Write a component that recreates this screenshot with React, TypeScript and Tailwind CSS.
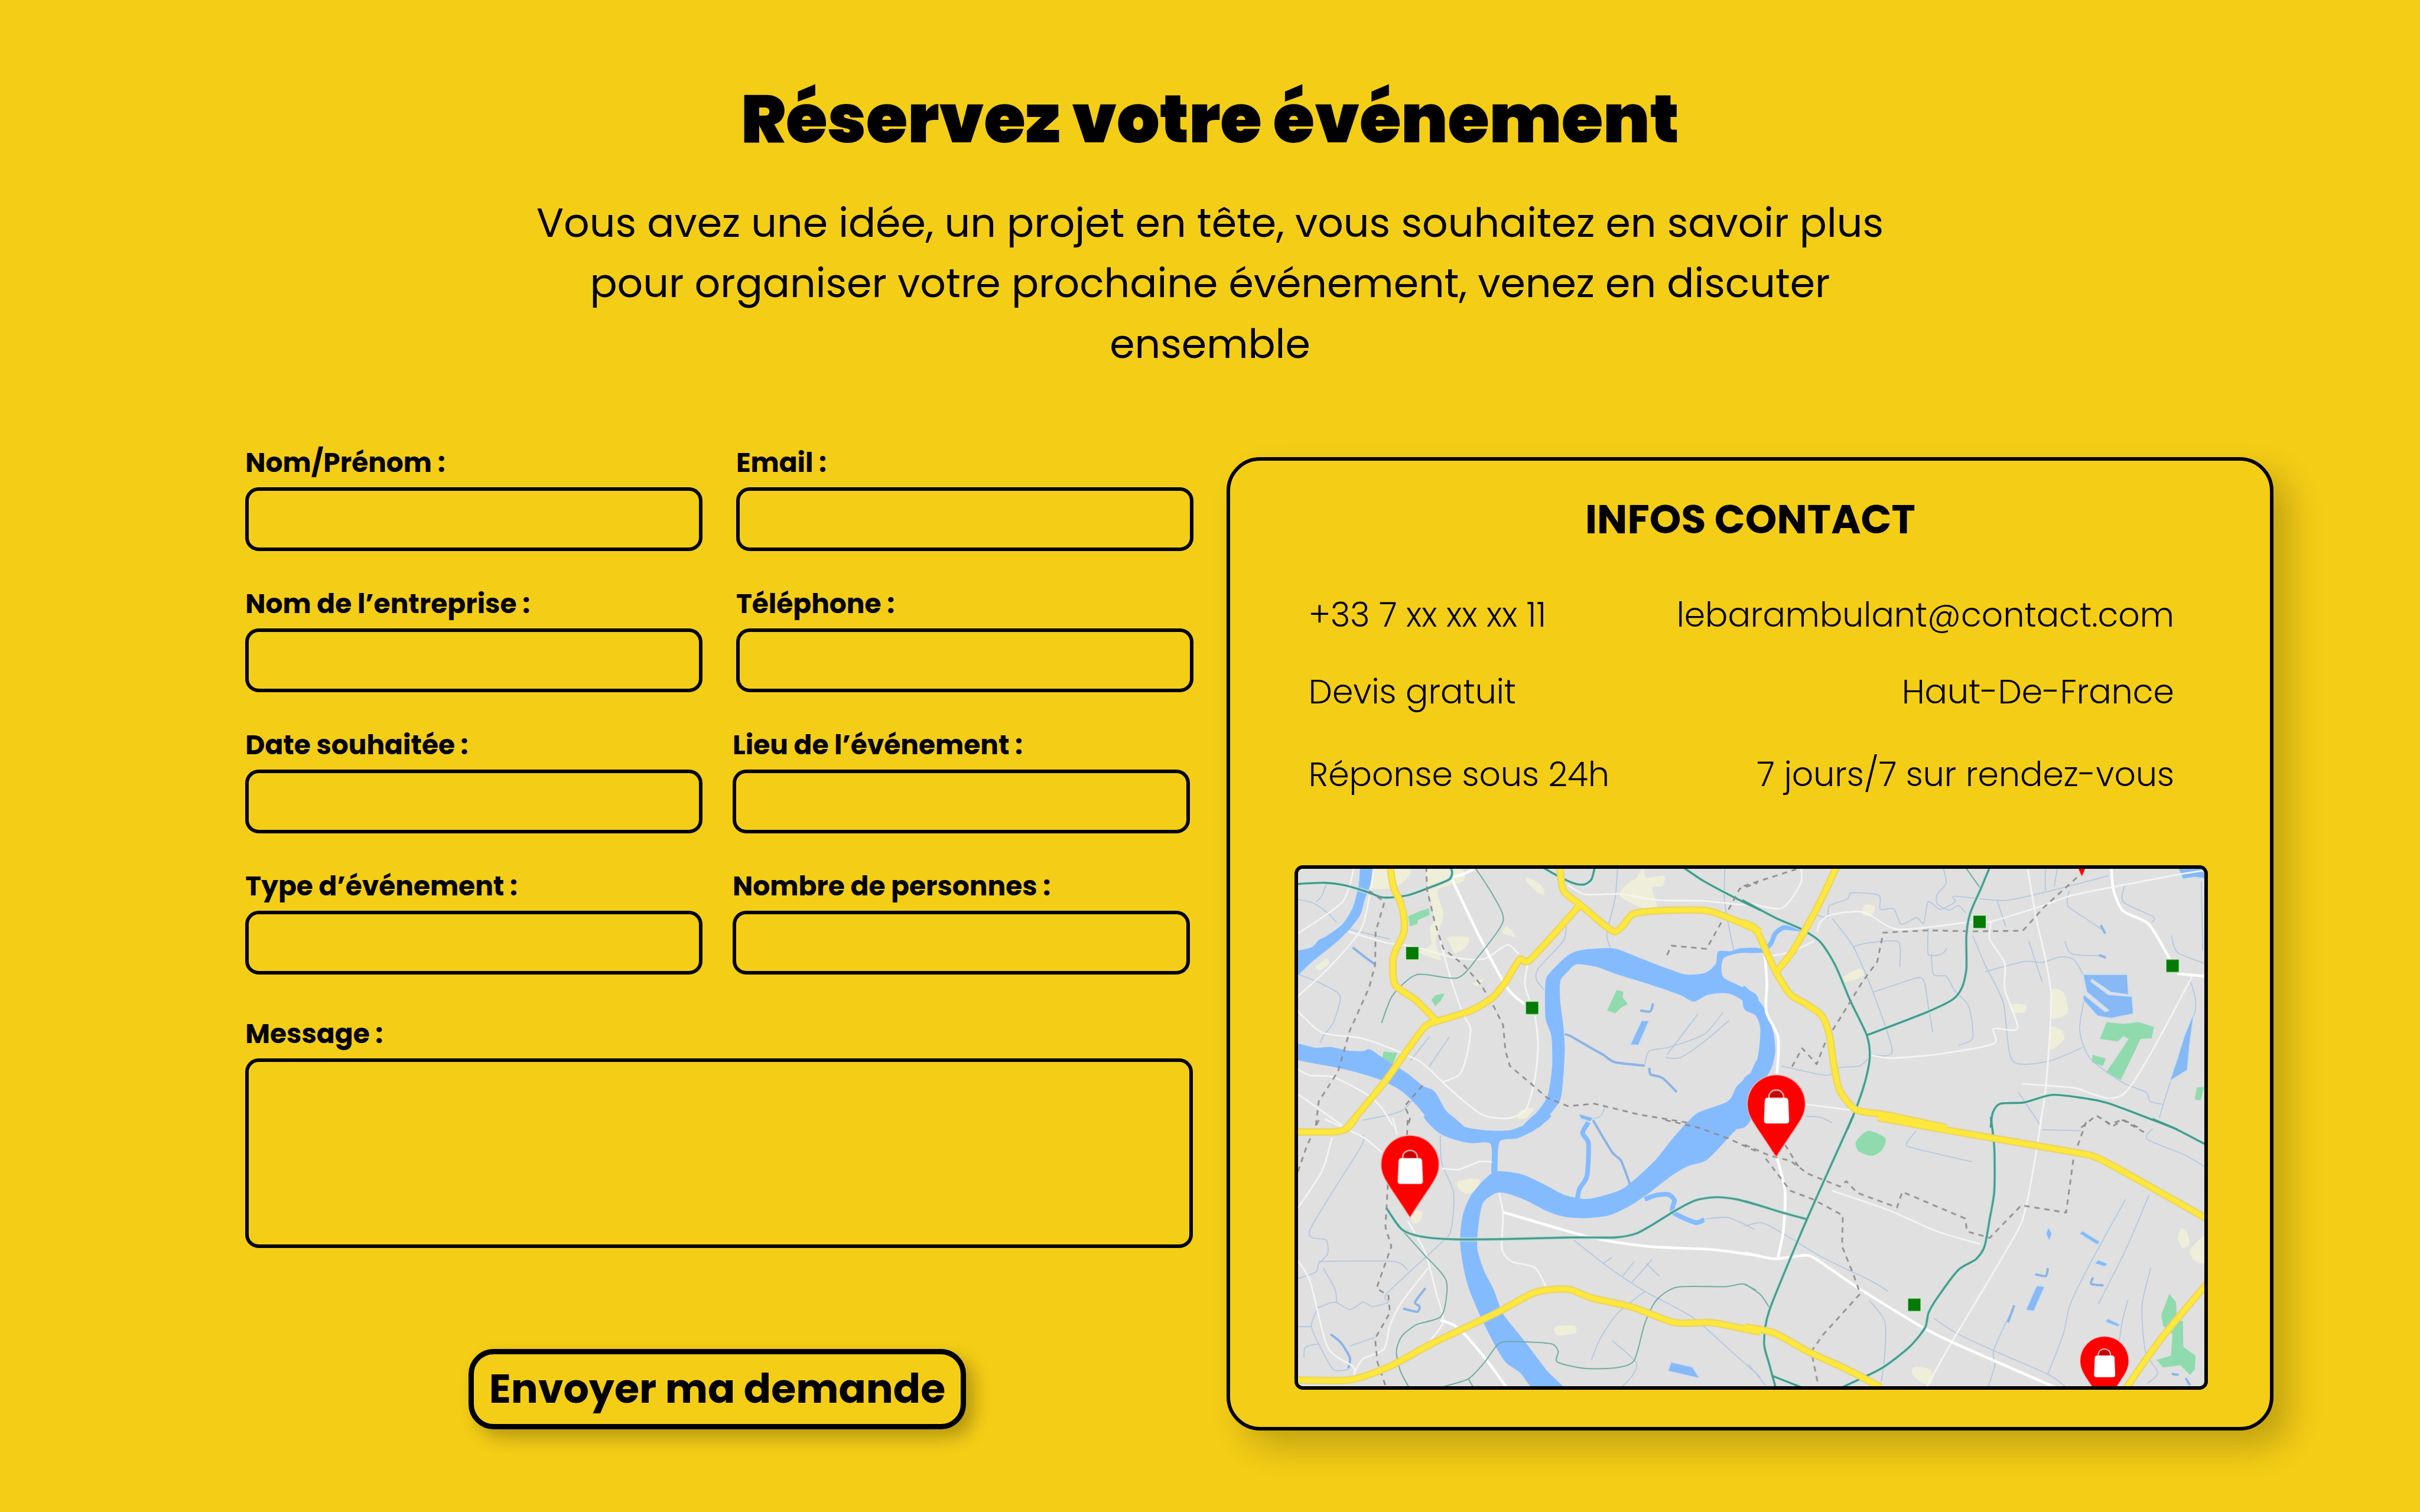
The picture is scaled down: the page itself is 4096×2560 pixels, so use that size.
import type { ReactNode } from "react";

/* ------------------------------------------------------------------ map */

type Tile = "nw" | "ne" | "sw" | "se";
type Shape = [Tile, string];

// Each quadrant of the map has its own drawing grid.
const TILE: Record<Tile, string> = {
  nw: "translate(2300 1530) scale(0.52934 0.33333)",
  ne: "translate(3120 1530) scale(0.53571 0.33333)",
  sw: "translate(2300 2000) scale(0.52934 0.38265)",
  se: "translate(3120 2000) scale(0.625 0.38265)",
};

// Catmull-Rom curve through "x,y x,y ..." points.
function curve(points: string, closed: boolean): string {
  const p = points.trim().split(/\s+/).map((s) => s.split(",").map(Number));
  const n = p.length;
  const at = (i: number) => (closed ? p[(i + n) % n] : p[Math.max(0, Math.min(n - 1, i))]);
  let d = `M${p[0][0]} ${p[0][1]}`;
  const last = closed ? n : n - 1;
  for (let i = 0; i < last; i++) {
    const [a, b, c, e] = [at(i - 1), at(i), at(i + 1), at(i + 2)];
    const k = 8;
    d += `C${b[0] + (c[0] - a[0]) / k} ${b[1] + (c[1] - a[1]) / k} ${c[0] - (e[0] - b[0]) / k} ${c[1] - (e[1] - b[1]) / k} ${c[0]} ${c[1]}`;
  }
  return closed ? d + "Z" : d;
}

const straight = (points: string) => "M" + points.trim().split(/\s+/).join("L");

function Lines({ items, color, width, dash, sharp, opacity }: { items: Shape[]; color: string; width: number; dash?: string; sharp?: boolean; opacity?: number }) {
  return (
    <g fill="none" stroke={color} strokeWidth={width} strokeDasharray={dash} strokeLinejoin="round" opacity={opacity}>
      {items.map(([t, pts], i) => (
        <g key={i} transform={TILE[t]}>
          <path d={sharp ? straight(pts) : curve(pts, false)} vectorEffect="non-scaling-stroke" />
        </g>
      ))}
    </g>
  );
}

function Areas({ items, color, halo, sharp }: { items: Shape[]; color: string; halo?: string; sharp?: boolean }) {
  return (
    <g fill={color} stroke={halo} strokeWidth={halo ? 4 : 0} strokeLinejoin="round" paintOrder="stroke">
      {items.map(([t, pts], i) => (
        <g key={i} transform={TILE[t]}>
          <path d={sharp ? straight(pts) + "Z" : curve(pts, true)} vectorEffect="non-scaling-stroke" paintOrder="stroke" />
        </g>
      ))}
    </g>
  );
}

const rivers: Shape[] = [
  ["nw", "243,40 280,40 275,140 255,230 240,310 205,385 150,470 75,565 35,625 10,640 10,518 75,485 100,445 125,425 180,360 215,270 235,150"],
  ["nw", "10,998 90,1022 140,1018 200,1038 250,1040 272,1030 315,1075 365,1125 400,1160 450,1225 492,1258 530,1360 590,1450 500,1450 430,1330 380,1255 310,1195 230,1155 150,1125 10,1078"],
  ["sw", "455,-20 500,55 550,88 610,108 680,112 683,245 702,245 710,102 770,85 830,45 885,-20 825,-20 790,25 745,47 700,50 645,45 590,30 545,-20"],
  ["nw", "785,1450 840,1360 870,1290 882,1200 888,1100 885,960 865,860 865,670 880,620 930,540 960,510 1000,495 1070,488 1110,495 1190,545 1280,600 1340,630 1405,620 1440,570 1447,507 1490,505 1520,490 1580,487 1580,512 1520,515 1465,545 1463,640 1520,690 1580,745 1580,850 1530,770 1490,735 1450,730 1410,740 1365,775 1320,740 1250,700 1170,660 1100,625 1040,590 970,575 940,615 915,665 915,780 925,900 930,1020 926,1160 915,1300 870,1400 842,1450"],
  ["ne", "-15,690 45,790 70,870 85,950 90,1040 80,1120 60,1180 30,1230 -15,1320 -15,1190 20,1140 35,1040 40,920 25,850 -15,810"],
  ["nw", "1580,1090 1555,1160 1510,1230 1480,1310 1375,1375 1350,1450 1535,1450 1580,1280"],
  ["sw", "1378,-20 1310,60 1240,180 1180,260 1120,325 1040,360 990,368 930,350 860,300 790,255 730,240 690,243 650,290 610,360 585,450 577,570 590,700 610,800 650,930 690,1040 730,1130 780,1180 830,1260 930,1260 870,1170 810,1060 770,990 720,900 690,790 660,710 635,600 640,480 655,385 700,340 740,345 800,375 870,425 930,452 1000,458 1080,445 1150,400 1210,345 1290,260 1345,215 1410,185 1490,70 1540,-20"],
];

const ponds: Shape[] = [
  ["nw", "1190,880 1212,880 1178,1005 1153,1005"],
  ["ne", "1118,632 1262,632 1266,735 1210,722 1145,652 1140,668 1200,740 1278,750 1282,838 1210,862 1165,850 1118,765 1118,740 1190,832 1205,822 1130,722"],
  ["ne", "1483,850 1470,1000 1462,1140 1408,1195 1432,1080 1455,960"],
  ["ne", "1435,60 1530,60 1530,115 1490,105 1450,115"],
  ["se", "825,775 845,780 815,890 795,885"],
  ["se", "955,520 1002,568 998,580 948,530"],
  ["se", "858,505 866,530 860,560 852,530"],
  ["se", "1000,655 1025,672 1018,682 992,668"],
  ["se", "1028,930 1060,955 1055,963 1022,940"],
  ["sw", "1290,1133 1360,1155 1382,1203 1280,1170"],
  ["nw", "980,1380 1025,1400 1015,1415 985,1400"],
];

const parks: Shape[] = [
  ["nw", "402,318 440,290 472,275 475,310 435,338 432,360 408,372"],
  ["nw", "525,730 512,770 493,800 480,765 495,740"],
  ["nw", "318,1042 365,1050 350,1110 315,1080"],
  ["nw", "1105,713 1128,722 1125,752 1143,788 1120,808 1100,838 1073,822"],
  ["ne", "1195,885 1250,895 1300,885 1352,910 1345,972 1308,975 1242,1195 1192,1155 1225,1080 1268,975 1250,960 1232,988 1172,975"],
  ["ne", "1148,1060 1192,1080 1182,1120 1145,1100"],
  ["ne", "1495,1235 1520,1232 1508,1305 1488,1300"],
  ["se", "1203,812 1222,850 1225,930 1242,940 1243,1060 1278,1100 1276,1165 1262,1190 1235,1145 1185,1155 1167,1120 1208,1100 1212,1000 1185,960 1180,910"],
];
const roundPark: Shape[] = [["se", "343,50 392,85 382,140 353,167 315,145 308,100"]];

const fields: Shape[] = [
  ["nw", "1195,60 1205,110 1265,100 1260,155 1225,165 1240,268 1185,268 1115,205 1150,130 1170,115"],
  ["nw", "805,110 850,150 862,200 840,190 800,130"],
  ["nw", "280,60 405,60 395,120 350,165 280,165"],
  ["nw", "470,60 580,60 590,125 545,150 500,180 520,310 495,450 510,550 440,510 480,470 475,380 490,330 470,170"],
  ["nw", "535,428 605,430 598,480 560,515 545,470"],
  ["nw", "735,370 765,430 720,405"],
  ["nw", "90,590 125,545 135,570 105,605"],
  ["nw", "780,1360 825,1345 800,1400 770,1400"],
  ["nw", "620,680 655,650 640,690"],
  ["ne", "390,255 422,265 410,315 380,305"],
  ["ne", "318,640 372,598 385,635 325,670"],
  ["ne", "1010,715 1050,725 1065,835 1010,862"],
  ["ne", "875,790 925,792 920,835 880,830"],
  ["ne", "1005,912 1045,930 1052,980 1008,1030"],
  ["sw", "570,285 640,275 635,320 600,345 572,320"],
  ["sw", "415,420 450,430 440,475 415,480"],
  ["sw", "898,965 962,960 965,995 905,1005"],
  ["se", "1238,505 1255,530 1260,580 1240,598 1228,550"],
  ["se", "1310,540 1310,665 1275,655 1262,615 1275,580"],
  ["se", "472,1155 520,1165 525,1225 500,1230 470,1190"],
];

const majorRoads: Shape[] = [
  ["nw", "340,40 352,160 375,240 388,330 386,410 360,500 350,560 358,685 430,770 498,880"],
  ["nw", "912,40 926,180 982,255 1060,360 1098,400 1125,370 1155,310 1190,295 1290,285 1395,285 1440,300 1520,350 1590,400"],
  ["nw", "982,255 815,548 778,550 730,670 685,755 610,825 500,880 455,915 370,1100 320,1210 190,1460"],
  ["sw", "225,-10 195,40 150,55 20,55"],
  ["ne", "298,40 230,270 150,500 95,612"],
  ["ne", "-20,350 20,378 45,450 90,610 140,735 190,785 245,850 270,950 285,1110 305,1250 360,1355 460,1382 660,1450"],
  ["se", "370,-12 560,45 930,150 1000,178 1110,275 1320,470"],
  ["sw", "10,1213 205,1213 340,1150 480,1045 700,900 830,805 940,790 1020,830 1160,875 1300,945 1420,945 1500,965 1590,990"],
  ["se", "-10,965 75,995 170,1080 290,1170 380,1250"],
  ["se", "1320,745 1180,1020 1080,1250"],
];

const transit: Shape[] = [
  ["nw", "20,145 120,138 190,152 260,185 318,217 400,205 480,160 540,120 550,85 545,50"],
  ["nw", "850,50 905,100 960,140 995,147 1020,120 1032,50"],
  ["nw", "1325,50 1400,130 1500,215 1590,285"],
  ["ne", "-20,230 90,325 175,385 240,455 290,580 340,770 395,955 405,1070 390,1200 360,1345 330,1460"],
  ["ne", "806,50 775,170 740,300 727,420 727,600 712,700 680,765 590,835 395,955"],
  ["ne", "808,1450 815,1370 840,1322 920,1315 1010,1275 1100,1288 1190,1315 1310,1385 1430,1460"],
  ["sw", "328,410 380,510 450,545 560,557 750,555 950,548 1100,548 1170,530 1230,485 1300,425 1370,375 1440,360 1510,370 1590,400"],
  ["se", "-10,378 90,428 165,462"],
  ["se", "300,-20 220,270 150,530 60,890 45,1040 60,1140 80,1260"],
  ["se", "693,-15 703,130 703,330 690,460 675,590 650,650 600,700 540,830 515,900 505,970 460,1060 380,1160 265,1250"],
  ["se", "1155,-5 1220,40 1320,125"],
  ["se", "70,1195 155,1250"],
];
const thinTransit: Shape[] = [
  ["nw", "625,50 690,210 722,345 640,530 568,648 432,630 350,740 312,890"],
  ["sw", "385,520 450,620 530,750 515,912 430,955 380,1010 362,1080 375,1170 405,1250"],
  ["sw", "520,1245 605,1208 660,1130 710,1042 780,1035 885,1045 908,1080 905,1130 1000,1160 1110,1155 1165,1120 1200,950 1240,840 1310,780 1470,778 1530,765 1575,795"],
  ["sw", "605,1208 622,1250"],
  ["se", "-10,765 35,815 62,880"],
  ["ne", "722,50 775,170"],
];

const whiteMajor: Shape[] = [
  ["nw", "550,120 640,420 735,700 795,790"],
  ["nw", "545,110 590,90 640,50"],
  ["ne", "1210,50 1218,180 1250,290 1335,360 1410,560"],
  ["ne", "1430,625 1530,640"],
  ["ne", "55,510 62,680 60,830 100,970 95,1180"],
  ["sw", "722,430 1010,545 1210,590 1430,605 1590,635"],
  ["sw", "512,935 570,970 660,1110 735,1250"],
  ["se", "-10,620 75,648 170,632 230,690 320,790 500,970 600,1050 880,1250"],
  ["se", "80,165 105,330 100,520 85,640"],
];
const whiteMinor: Shape[] = [
  ["nw", "220,50 180,240 20,420"],
  ["nw", "285,80 245,380 130,600 20,760"],
  ["nw", "200,400 330,460 420,480 560,540 660,545 735,470 775,520"],
  ["nw", "940,150 1000,200 1120,198 1240,230 1400,235 1520,255 1580,260"],
  ["nw", "510,450 545,650 590,850 612,920 600,1060 575,1165 520,1205"],
  ["nw", "20,810 110,940 240,970 350,1030 450,1105 540,1240 650,1380 740,1400 800,1350 830,1180 840,1000 830,850"],
  ["nw", "805,570 795,680 812,770"],
  ["nw", "20,1130 70,1170 150,1180 260,1270 310,1340 350,1440"],
  ["nw", "20,1260 180,1440"],
  ["ne", "175,50 175,140 110,275 -10,240"],
  ["ne", "230,400 240,350 280,308 385,295 500,388 730,350 810,345 980,262 1080,205 1250,150 1440,92 1530,70"],
  ["ne", "810,345 805,440 855,570 855,710 898,918 818,920 818,1000 640,1055 480,1078 410,1062"],
  ["ne", "930,50 960,330 990,540 1010,740 1005,950 990,1260 970,1460"],
  ["ne", "910,1215 1080,1235 1255,1265 1480,640"],
  ["ne", "75,530 140,510 220,450"],
  ["ne", "190,1325 360,1360"],
  ["sw", "350,-10 365,70"],
  ["sw", "120,-5 250,80 320,160"],
  ["sw", "145,80 110,240 20,430"],
  ["sw", "515,225 575,230 640,195 685,195"],
  ["sw", "708,340 722,440 718,600 750,660 830,690 870,790"],
  ["sw", "20,640 70,750 130,1060 215,1150 220,1190"],
  ["sw", "400,470 460,620 495,800 520,940 470,1040"],
  ["sw", "470,690 380,850 340,960 320,1070 250,1115 220,1180"],
  ["se", "838,-10 810,270 780,480 690,740 580,1040 510,1245"],
  ["se", "240,330 400,420 540,520 665,580"],
];

const streams: Shape[] = [
  ["nw", "20,225 80,245 130,300 160,350"],
  ["nw", "125,150 110,210 90,240"],
  ["nw", "20,620 110,680 172,745 150,885 115,960 105,1000"],
  ["nw", "1108,60 1100,220 1072,410 1085,490"],
  ["nw", "935,370 925,450 840,600 835,660 860,710"],
  ["nw", "475,960 410,1090"],
  ["nw", "540,965 470,1130"],
  ["nw", "1380,840 1275,1060"],
  ["nw", "1465,830 1400,950 1280,1020 1215,1040 1200,1110"],
  ["nw", "1485,875 1400,990 1320,1075 1270,1075"],
  ["nw", "200,385 340,440"],
  ["nw", "1470,60 1470,250 1500,500"],
  ["nw", "250,1410 380,1360 450,1230"],
  ["nw", "1065,1340 1050,1390 1005,1410"],
  ["ne", "230,310 265,325 270,262 330,225 345,192 435,205 440,280 485,278 510,360 560,325 585,355 600,240 640,280 690,240 690,210 860,232 1060,160 1200,100"],
  ["ne", "650,60 660,140 630,200 630,250 670,285 700,260 725,300"],
  ["ne", "280,330 350,480 415,720 480,1040 415,1062"],
  ["ne", "350,480 400,460 500,455 505,590"],
  ["ne", "600,380 600,520 645,520 662,490"],
  ["ne", "610,520 618,630 660,640 690,720 735,800 748,970 700,1010"],
  ["ne", "415,725 500,680 580,650 600,800 615,940"],
  ["ne", "830,235 858,370"],
  ["ne", "748,420 790,580 850,780 880,1090 1000,1095 1115,1020"],
  ["ne", "790,615 920,560 980,565 1040,535 1085,550 1120,640"],
  ["ne", "1055,450 1080,520 1190,530"],
  ["ne", "1070,180 1065,260 1130,335 1190,400"],
  ["ne", "1255,150 1250,240 1350,320 1345,350"],
  ["ne", "1410,420 1430,510 1520,570"],
  ["ne", "1120,760 1105,930 1140,1080 1250,1210 1325,1260 1340,1310 1380,1325"],
  ["ne", "1470,650 1490,820 1400,1240 1370,1400"],
  ["ne", "935,450 980,670"],
  ["ne", "990,60 990,180"],
  ["ne", "1030,60 1020,160"],
  ["ne", "110,1120 260,1170 300,1130 370,1120 400,1080"],
  ["ne", "900,1260 975,1440"],
  ["ne", "190,1390 240,1395 280,1425"],
  ["ne", "1510,130 1515,500"],
  ["sw", "250,70 240,130 70,515 125,560 130,625 100,670 90,710 20,745"],
  ["sw", "100,660 350,660 400,700"],
  ["sw", "510,70 515,200 555,340 545,520 500,590 330,810 335,850 280,870 250,850 205,885 155,850 100,875"],
  ["sw", "115,690 155,790 160,850"],
  ["sw", "100,870 75,960 105,1060 150,1165 200,1165"],
  ["sw", "20,965 75,965"],
  ["sw", "205,1055 290,1015"],
  ["sw", "50,1110 55,1060 100,1045"],
  ["sw", "960,560 1080,690 1200,800 1360,920 1500,1090 1590,1200"],
  ["sw", "1060,670 1090,640"],
  ["sw", "1125,730 1165,660"],
  ["sw", "1155,760 1225,650"],
  ["sw", "1205,670 1250,730"],
  ["sw", "1200,800 1110,900 1050,1020 1020,1120"],
  ["sw", "1090,1030 1170,1130 1160,1190 1120,1250"],
  ["sw", "1390,465 1480,455 1570,510"],
  ["se", "480,50 452,110 470,130 640,195"],
  ["se", "840,45 950,50"],
  ["se", "-10,495 40,480 110,540 210,640 350,750 400,800"],
  ["se", "345,840 390,940 390,1100 380,1220"],
  ["se", "530,925 600,1000 720,1090 860,1190 910,1250"],
  ["se", "760,870 735,950 700,1080 705,1140 685,1250"],
  ["se", "1078,370 980,660 920,860 900,1000 855,1190"],
  ["se", "1145,350 1080,600 1000,860"],
  ["se", "1150,690 1125,870 1135,1080 1170,1180 1140,1230"],
  ["se", "1085,840 1070,930 1060,1030"],
  ["se", "1155,40 1140,90 1250,165 1320,235"],
  ["se", "0,1140 50,1240"],
];
const brooks: Shape[] = [
  ["nw", "215,485 255,535 290,575"],
  ["nw", "930,950 950,960 1020,1025 1060,1060 1100,1100 1200,1118"],
  ["nw", "1215,1130 1220,1165 1260,1185 1308,1260"],
  ["nw", "1185,822 1218,828 1228,785"],
  ["ne", "1175,365 1190,410"],
  ["ne", "1170,525 1192,540"],
  ["sw", "460,785 425,850 440,870 432,895 385,880"],
  ["sw", "140,1000 175,1040 205,1110 200,1160"],
  ["sw", "1025,0 1090,150 1120,190 1150,300"],
  ["se", "820,720 850,728 856,692"],
  ["se", "985,735 980,765 1015,772"],
  ["se", "760,865 742,945"],
  ["se", "1210,1185 1230,1190"],
  ["se", "1250,1205 1262,1238"],
];
const canals: Shape[] = [
  ["ne", "-10,500 45,500 75,465 90,410 120,378 175,388"],
  ["sw", "1010,10 990,60 1010,110 1005,260 980,320 972,370"],
  ["sw", "1200,370 1240,350 1280,348 1300,375 1295,430 1370,478 1400,465"],
];

const dashes: Shape[] = [
  ["nw", "463,50 465,170 490,340 520,490 590,580 650,690 690,800 722,900 730,1040 745,1120 820,1220 870,1290 940,1335 1030,1322 1180,1380 1350,1425"],
  ["nw", "270,180 322,240 292,400 290,580 270,700 205,930 165,1150 100,1310 90,1440"],
  ["nw", "1275,525 1290,475 1408,492 1490,260 1520,170 1580,140"],
  ["nw", "450,1225 390,1335 408,1400 400,1450"],
  ["ne", "-15,155 160,65"],
  ["ne", "1095,110 985,270 915,395 745,398 600,393 450,405 430,560 380,670 300,880 260,980 228,1110 180,1025 140,1140"],
  ["ne", "1110,1450 1160,1385 1205,1430 1250,1408 1300,1450"],
  ["sw", "100,0 60,120 30,240"],
  ["sw", "400,0 398,70"],
  ["sw", "333,300 325,500 345,590 295,785 335,820 340,900 290,1020 298,1130 325,1240"],
  ["sw", "1270,0 1380,35 1480,85 1575,145"],
  ["se", "-10,115 60,165 120,190 170,250 262,310 280,285 312,340 425,408 440,335 620,460 625,520 690,550 780,398 908,432 930,170 965,10"],
  ["se", "50,180 120,330 185,370 270,445 268,590 300,720 320,810 215,1000 180,1080 200,1240"],
  ["se", "105,115 150,235"],
  ["se", "1020,5 1040,30 1070,0 1140,65"],
];

const stations: [number, number][] = [[2520, 1701.7], [2734, 1799.5], [3533, 1645.7], [3877.7, 1724.3], [3416.5, 2330]];

function Pin({ x, y, scale = 1 }: { x: number; y: number; scale?: number }) {
  return (
    <g transform={`translate(${x} ${y}) scale(${scale})`}>
      <path d="M0 -51A51 51 0 0 1 51 0C51 24 38 34 0 94C-38 34 -51 24 -51 0A51 51 0 0 1 0 -51Z" fill="#fe0000" stroke="#f6b4b4" strokeWidth="3" paintOrder="stroke" />
      <path d="M-13 -9V-13A13 12 0 0 1 13 -13V-9Z" fill="#c80000" stroke="#ffb9b9" strokeWidth="2.5" />
      <path d="M-16 -11H16Q21 -11 21.5 -6L23 30Q23 35 18 35H-17Q-22 35 -22 30L-20.500 -6Q-20 -11 -16 -11Z" fill="#fff" />
    </g>
  );
}

function Map() {
  return (
    <svg className="block h-full w-full bg-[#e0e0e0]" viewBox="2316 1551 1619 924" preserveAspectRatio="none" role="img" aria-label="Carte">
      <Areas items={fields} color="#efefd9" />
      <Areas items={parks} color="#8fdbad" sharp />
      <Areas items={roundPark} color="#8fdbad" />
      <Lines items={streams} color="#b3c8e0" width={1.8} />
      <Lines items={brooks} color="#8ab4e6" width={4} />
      <Lines items={canals} color="#84bbff" width={8} />
      <Areas items={ponds} color="#86b9f5" halo="#cfdeee" sharp />
      <Areas items={rivers} color="#84bbff" />
      <Lines items={whiteMinor} color="#f4f4f4" width={2.8} />
      <Lines items={whiteMajor} color="#ffffff" width={4.6} />
      <Lines items={thinTransit} color="#6fada3" width={2} />
      <Lines items={transit} color="#c8ebe6" width={7} opacity={0.7} />
      <Lines items={transit} color="#47988b" width={3.4} />
      <Lines items={dashes} color="#8f8b8b" width={2.7} dash="9 8" sharp />
      <Lines items={majorRoads} color="#e8d266" width={12.5} />
      <Lines items={majorRoads} color="#fde83b" width={8.5} />
      {stations.map(([x, y]) => (
        <rect key={x} x={x - 11} y={y - 11} width="22" height="22" fill="#057a05" stroke="#d5ecd0" strokeWidth="4" paintOrder="stroke" />
      ))}
      <path d="M3707 1545H3724L3715.700 1564Z" fill="#fe0000" />
      <Pin x={3170} y={1971} />
      <Pin x={2516} y={2079} />
      <Pin x={3756} y={2430} scale={0.84} />
    </svg>
  );
}

/* ----------------------------------------------------------------- form */

function Field({ label }: { label: string }) {
  return (
    <label className="flex w-[773.7px] flex-col gap-[11.8px]">
      <span className="h-[60px] whitespace-nowrap text-[45.51px] font-bold leading-[60px]">{label}</span>
      <input className="h-[108.1px] w-full rounded-[22.8px] border-[6px] border-black bg-transparent px-6 text-[45.51px] outline-none" />
    </label>
  );
}

function InfoRow({ children }: { children: ReactNode }) {
  return <div className="flex h-[80px] justify-between whitespace-nowrap text-[56.89px] font-light leading-[80px]">{children}</div>;
}

export default function App() {
  return (
    <main className="h-[2560px] w-[4096px] overflow-hidden bg-[#f4cd16] font-['Poppins','Inter',sans-serif] text-black">
      <header className="flex flex-col items-center pt-[151.6px] text-center">
        <h1 className="h-[100px] whitespace-nowrap text-[113.78px] font-black leading-[100px]">Réservez votre événement</h1>
        <p className="mt-[74.300px] w-[2330px] text-[68.27px] leading-[102.4px]">
          Vous avez une idée, un projet en tête, vous souhaitez en savoir plus pour organiser votre prochaine événement, venez en discuter ensemble
        </p>
      </header>

      <div className="mt-[120px] flex pl-[415.3px]">
        <form className="flex w-[1661.1px] flex-col" onSubmit={(e) => e.preventDefault()}>
          <div className="flex flex-col gap-[59px]">
            <div className="flex gap-[56.9px]">
              <Field label="Nom/Prénom :" />
              <Field label="Email :" />
            </div>
            <div className="flex gap-[56.9px]">
              <Field label="Nom de l’entreprise :" />
              <Field label="Téléphone :" />
            </div>
            <div className="flex gap-[51.1px]">
              <Field label="Date souhaitée :" />
              <Field label="Lieu de l’événement :" />
            </div>
            <div className="flex gap-[51.1px]">
              <Field label="Type d’événement :" />
              <Field label="Nombre de personnes :" />
            </div>
          </div>
          <label className="mt-[70.4px] flex w-[1603.5px] flex-col gap-[11.8px]">
            <span className="h-[60px] text-[45.51px] font-bold leading-[60px]">Message :</span>
            <textarea className="block h-[321.4px] w-full resize-none rounded-[22.8px] border-[6px] border-black bg-transparent p-6 text-[45.51px] outline-none" />
          </label>
          <button className="ml-[377.7px] mt-[170.7px] flex h-[136.5px] w-[842px] items-center justify-center whitespace-nowrap rounded-[42.7px] border-[9px] border-black bg-[#f4cd16] pb-[2px] text-[68.27px] font-bold leading-[80px] shadow-[14.2px_14.2px_28.4px_rgba(0,0,0,0.25)]">
            Envoyer ma demande
          </button>
        </form>

        <section className="mt-[21.200px] flex h-[1647.5px] w-[1772px] shrink-0 flex-col rounded-[56.9px] border-[6px] border-black bg-[#f4cd16] px-[108.4px] pt-[58.6px] shadow-[28.4px_28.4px_56.9px_rgba(0,0,0,0.2)]">
          <h2 className="h-[80px] text-center text-[68.27px] font-bold leading-[80px]">INFOS CONTACT</h2>
          <div className="mt-[82.1px] pl-[24px] pr-[54px]">
            <InfoRow>
              <span>+33 7 xx xx xx 11</span>
              <span>lebarambulant@contact.com</span>
            </InfoRow>
            <div className="mt-[49.6px]">
              <InfoRow>
                <span>Devis gratuit</span>
                <span>Haut-De-France</span>
              </InfoRow>
            </div>
            <div className="mt-[60.7px]">
              <InfoRow>
                <span>Réponse sous 24h</span>
                <span>7 jours/7 sur rendez-vous</span>
              </InfoRow>
            </div>
          </div>
          <div className="mt-[114px] h-[887.5px] w-[1546.5px] shrink-0 overflow-hidden rounded-[14.2px] border-[6px] border-black">
            <Map />
          </div>
        </section>
      </div>
    </main>
  );
}
